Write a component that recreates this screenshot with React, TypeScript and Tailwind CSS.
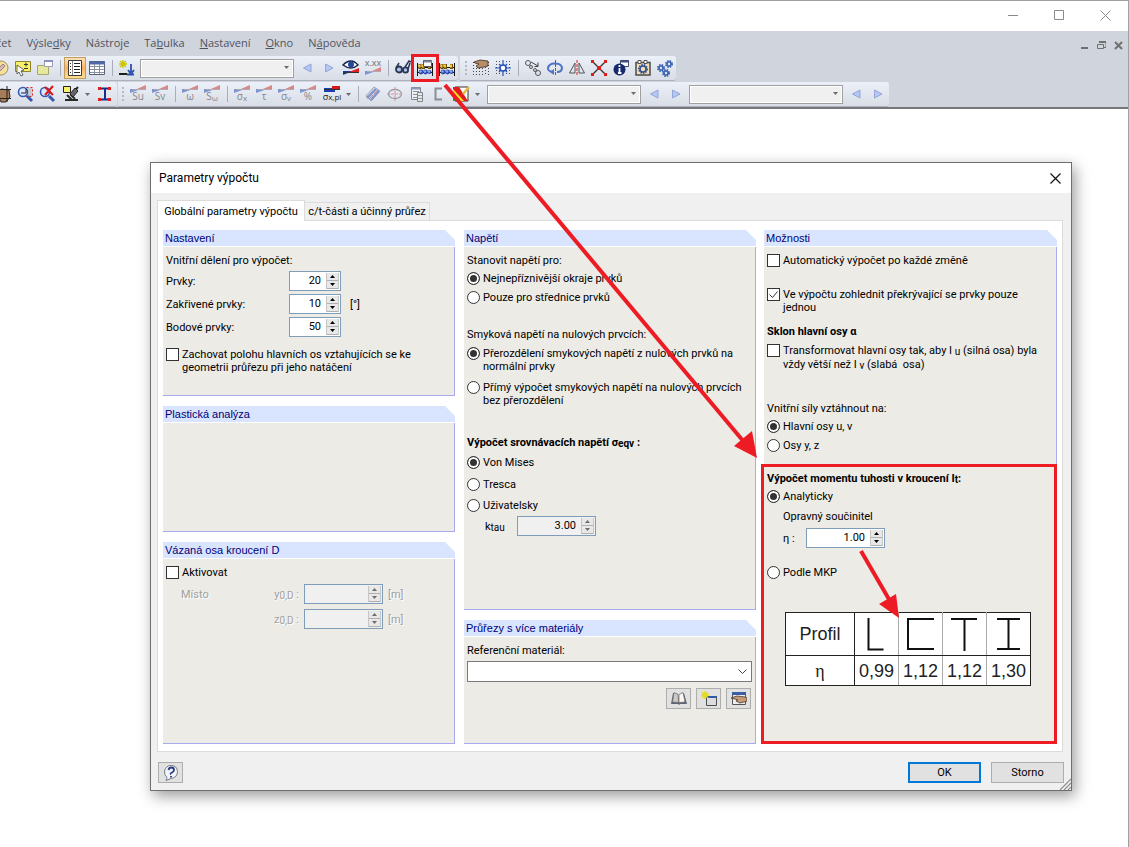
import type { ReactNode } from "react";
import clsx from "clsx";

interface IconButtonProps {
  label: string;
  active?: boolean;
  children: ReactNode;
}

function IconButton({ label, active, children }: IconButtonProps) {
  return (
    <button
      type="button"
      aria-label={label}
      className={clsx(
        "flex h-[22px] w-[22px] shrink-0 items-center justify-center",
        active && "border border-[#c29b5e] bg-gradient-to-b from-[#fde3b8] via-[#fbb25c] to-[#fde08f]"
      )}>
      <svg width="16" height="16" viewBox="0 0 16 16" className="shrink-0 overflow-visible" aria-hidden="true">
        {children}
      </svg>
    </button>
  );
}

function Separator() {
  return (
    <div className="flex w-2 shrink-0 justify-center">
      <div className="h-4 w-px bg-[#a9adb8]" />
    </div>
  );
}

function Grip() {
  return (
    <div className="flex w-2 shrink-0 flex-col items-center gap-[2px]">
      <span className="h-[2px] w-[2px] bg-[#b4b8c2]" />
      <span className="h-[2px] w-[2px] bg-[#b4b8c2]" />
      <span className="h-[2px] w-[2px] bg-[#b4b8c2]" />
      <span className="h-[2px] w-[2px] bg-[#b4b8c2]" />
    </div>
  );
}

function MoreButton({ label }: { label: string }) {
  return (
    <button type="button" aria-label={label} className="flex h-[22px] w-[11px] shrink-0 items-center justify-center">
      <svg width="5" height="3" viewBox="0 0 5 3" aria-hidden="true">
        <path d="M0 0h5L2.500 3z" fill="#6b6b6b" />
      </svg>
    </button>
  );
}

function ToolbarSelect({ label }: { label: string }) {
  return (
    <div className="relative mx-[2px] h-[19px] w-[154px] shrink-0">
      <select
        aria-label={label}
        className="h-full w-full appearance-none border border-[#a0a0a0] bg-[#f0f0f0] shadow-[inset_0_0_0_1px_#fff]">
        <option></option>
      </select>
      <svg width="5" height="3" viewBox="0 0 5 3" className="pointer-events-none absolute top-[7px] right-[5px]" aria-hidden="true">
        <path d="M0 0h5L2.500 3z" fill="#6b6b6b" />
      </svg>
    </div>
  );
}

function Previous() {
  return (
    <IconButton label="Předchozí">
      <path d="M12 4v8L4.500 8z" fill="#b4c8f8" stroke="#94a5d6" />
    </IconButton>
  );
}

function Next() {
  return (
    <IconButton label="Další">
      <path d="M4.500 4v8L12 8z" fill="#b4c8f8" stroke="#94a5d6" />
    </IconButton>
  );
}

function Wedge() {
  return (
    <>
      <path d="M0 3h11L0 7z" fill="#7f95d2" />
      <path d="M7 3l9-4v4z" fill="#de8686" />
      <path d="M2 3.500h14" stroke="#a9acb5" />
    </>
  );
}

function StressButton({ label, symbol, sub }: { label: string; symbol: string; sub?: string }) {
  return (
    <IconButton label={label}>
      <Wedge />
      <text x="8" y="14" textAnchor="middle" fontSize="10" fill="#85888f">
        {symbol}
        {sub && <tspan fontSize="8" dy="1">{sub}</tspan>}
      </text>
    </IconButton>
  );
}

function Gear({ x, y, r, color }: { x: number; y: number; r: number; color: string }) {
  return (
    <g>
      <circle cx={x} cy={y} r={r} fill="none" stroke={color} strokeWidth="2" strokeDasharray="1.400 1" />
      <circle cx={x} cy={y} r={r - 1} fill="none" stroke={color} strokeWidth="1.600" />
    </g>
  );
}

function Abacus() {
  return (
    <>
      <path d="M0.500 3v13M15.500 3v13M0 7.500h16M0 12.500h16" stroke="#151515" />
      <path d="M3 4v5M6.500 4v5M12.500 4v5" stroke="#6a4f08" strokeWidth="3" />
      <path d="M2.500 4.500v3M6 4.500v3M12 4.500v3" stroke="#f4c93c" strokeWidth="2" />
      <circle cx="4" cy="12" r="2.400" fill="#2b49a8" />
      <circle cx="8.500" cy="12" r="2.400" fill="#2b49a8" />
      <circle cx="12.500" cy="12" r="2" fill="#2b49a8" />
      <circle cx="3.500" cy="11.500" r="1.200" fill="#8fabf5" />
      <circle cx="8" cy="11.500" r="1.200" fill="#8fabf5" />
      <circle cx="12" cy="11.500" r="1.200" fill="#8fabf5" />
    </>
  );
}

const mainMenu = [
  { before: "čet", key: "", after: "" },
  { before: "Výsle", key: "d", after: "ky" },
  { before: "Nástro", key: "j", after: "e" },
  { before: "Ta", key: "b", after: "ulka" },
  { before: "", key: "N", after: "astavení" },
  { before: "", key: "O", after: "kno" },
  { before: "N", key: "á", after: "pověda" },
];

const toolbarClass =
  "flex h-[25px] items-center rounded-r-[3px] border-b border-[#aeb1bb] bg-gradient-to-b from-[#ecf0f8] to-[#d9dde6]";

function MainWindow() {
  return (
    <header className="overflow-hidden">
      <div className="flex h-[30px] items-center justify-end gap-[35px] pr-[17px] pb-[2px] text-[#8a8a8a]">
        <button type="button" aria-label="Minimalizovat" className="h-[11px] w-[11px]">
          <svg width="11" height="11" viewBox="0 0 11 11"><path d="M0 5.500h10" stroke="currentColor" /></svg>
        </button>
        <button type="button" aria-label="Maximalizovat" className="h-[11px] w-[11px]">
          <svg width="11" height="11" viewBox="0 0 11 11"><path d="M0.500 0.500h9v9h-9z" fill="none" stroke="currentColor" /></svg>
        </button>
        <button type="button" aria-label="Zavřít" className="h-[11px] w-[11px]">
          <svg width="11" height="11" viewBox="0 0 11 11"><path d="M0.500 0.500l10 10M10.500 0.500l-10 10" stroke="currentColor" /></svg>
        </button>
      </div>
      <div className="border-b-2 border-[#77777b] bg-[#d0d4dd]">
        <div className="flex h-[25px] items-center justify-between pr-[5px] pb-px">
          <nav className="-ml-1 flex gap-[15px] text-[11px] leading-4 text-[#4e535f]">
            {mainMenu.map((item) => (
              <a key={item.before + item.key} href="#">
                {item.before}
                <u>{item.key}</u>
                {item.after}
              </a>
            ))}
          </nav>
          <div className="flex items-center gap-2 pt-1 text-[#707070]">
            <button type="button" aria-label="Minimalizovat dokument">
              <svg width="8" height="9" viewBox="0 0 8 9"><path d="M0 7h7" stroke="currentColor" strokeWidth="2" /></svg>
            </button>
            <button type="button" aria-label="Obnovit dokument">
              <svg width="9" height="9" viewBox="0 0 9 9">
                <path d="M2 1.500h7v5H7M0.500 3.500h6v4h-6z" fill="none" stroke="currentColor" />
                <path d="M2 1h7" stroke="currentColor" strokeWidth="2" />
              </svg>
            </button>
            <button type="button" aria-label="Zavřít dokument">
              <svg width="9" height="9" viewBox="0 0 9 9"><path d="M1 1l7 7M8 1L1 8" stroke="currentColor" strokeWidth="2" /></svg>
            </button>
          </div>
        </div>

        <div className="flex gap-[2px] pb-px">
          <div className={toolbarClass}>
            <div className="-ml-[10px] flex items-center">
              <IconButton label="Zobrazit">
                <circle cx="8" cy="8" r="7" fill="#f1e19a" stroke="#a4905a" />
                <path d="M5 9l5-5 2 2-5 5z" fill="#d9b9bd" stroke="#937c82" />
              </IconButton>
              <IconButton label="Vybrat">
                <path d="M0.500 1.500h15v10h-15z" fill="#f7ef6a" stroke="#8f8430" />
                <path d="M11 2.500v4M9 4.500h4M9 8.500h4" stroke="#333" />
                <path d="M2 5l7 5-3 1 2 4-2 1-2-4-2 2z" fill="#fff" stroke="#444" strokeWidth="0.800" />
              </IconButton>
              <IconButton label="Nové okno">
                <path d="M0.500 5.500h11v9h-11z" fill="#e6e89c" stroke="#a5a970" />
                <path d="M7.500 0.500h8v6h-8z" fill="#fff" stroke="#9a9fb4" />
                <path d="M7 1h9" stroke="#8792c0" strokeWidth="2" />
              </IconButton>
              <Separator />
              <IconButton label="Navigátor" active>
                <path d="M1.500 0.500h13v15h-13z" fill="#fff" stroke="#3a3a3a" />
                <path d="M5.500 1v14" stroke="#888" />
                <path d="M7 3.500h6M7 6.500h6M7 9.500h6M7 12.500h6M3 3.500h1M3 6.500h1M3 9.500h1M3 12.500h1" stroke="#222" />
              </IconButton>
              <IconButton label="Tabulky">
                <path d="M0.500 1.500h15v13h-15z" fill="#fff" stroke="#5b6278" />
                <path d="M0 3h16" stroke="#5068a8" strokeWidth="3" />
                <path d="M1 6.500h14M1 9.500h14M1 12.500h14M5.500 4v10M10.500 4v10" stroke="#8a90a0" />
              </IconButton>
              <Separator />
              <IconButton label="Nový průřez">
                <path d="M4 0v8M0 4h8M1 1l6 6M7 1L1 7" stroke="#cdc500" strokeWidth="1.400" />
                <path d="M0 14h8" stroke="#1c1c1c" strokeWidth="2" />
                <path d="M12 4v8M9 10l3 4 3-4M8 14.500h7" stroke="#2c50a8" strokeWidth="1.800" fill="none" />
              </IconButton>
              <ToolbarSelect label="Zatěžovací stav" />
              <Previous />
              <Next />
              <IconButton label="Zobrazit výsledky">
                <path d="M0 5q8-8 15 0-7 6-15 0z" fill="#fff" stroke="#17224a" strokeWidth="1.400" />
                <circle cx="8" cy="4.500" r="3" fill="#24489d" />
                <path d="M0 11h10L0 15z" fill="#183ab0" />
                <path d="M6 12l10-4v4z" fill="#e02020" />
                <path d="M0 12.500h16" stroke="#333" />
              </IconButton>
              <IconButton label="Zobrazit hodnoty">
                <text x="8" y="6" textAnchor="middle" fontSize="9" fill="#6d7078">x.xx</text>
                <g transform="translate(0 8)"><Wedge /></g>
              </IconButton>
              <Separator />
              <IconButton label="Kontrola">
                <path d="M1 8L4 3M10 7l4-6 2 1" stroke="#2b3654" strokeWidth="1.500" fill="none" />
                <circle cx="4" cy="9.500" r="3" fill="#aac4e8" stroke="#2b3654" strokeWidth="1.800" />
                <circle cx="10.500" cy="10" r="2.600" fill="#aac4e8" stroke="#2b3654" strokeWidth="1.800" />
                <path d="M13 9l2-6" stroke="#2b3654" strokeWidth="1.500" />
              </IconButton>
              <IconButton label="Parametry výpočtu">
                <Abacus />
                <path d="M6.500 0.500h8v6h-8z" fill="#fff" stroke="#555" />
                <path d="M7 1.500h8" stroke="#7c869c" strokeWidth="2" />
              </IconButton>
              <IconButton label="Výpočet">
                <Abacus />
              </IconButton>
            </div>
          </div>
          <div className={clsx(toolbarClass, "pl-[2px]")}>
            <Grip />
            <IconButton label="Nastavit rastr">
              <path d="M0.500 2v14M3.500 8v8M6.500 8v8M9.500 8v8M12.500 7v9M15.500 2v14" stroke="#444" strokeDasharray="1 2" />
              <path d="M1 2l6-2 8 1v5l-4 1-6 1-2-2 3-2-4-1z" fill="#b98c68" stroke="#3d2c22" strokeWidth="0.800" />
            </IconButton>
            <IconButton label="Rastr">
              <path d="M1.500 1v15M4.500 1v15M11.500 1v15M14.500 1v15" stroke="#4b4f5c" strokeDasharray="1 2" />
              <path d="M8 0v16M0 8h16M4 4l8 8M12 4l-8 8" stroke="#2550b8" strokeWidth="1.200" />
              <circle cx="8" cy="8" r="3" fill="#fff" stroke="#2550b8" strokeWidth="1.500" />
            </IconButton>
            <Separator />
            <IconButton label="Kopírovat">
              <circle cx="3" cy="3" r="2.500" fill="none" stroke="#555" />
              <circle cx="6" cy="7" r="1.500" fill="none" stroke="#555" />
              <circle cx="13" cy="13" r="2.500" fill="none" stroke="#555" />
              <circle cx="10" cy="10" r="1.500" fill="none" stroke="#555" />
              <path d="M6 2l7 4M13 2.500V6.500H9.500" fill="none" stroke="#444" />
            </IconButton>
            <IconButton label="Otočit">
              <path d="M6 12Q0 11 1 7.500 3 3 8 3.500q6 0 7 4Q15 12 10 12" fill="none" stroke="#4e72c4" strokeWidth="2" />
              <path d="M7 9v6l-4-3z" fill="#4e72c4" />
              <path d="M8.500 0v16" stroke="#d22" strokeDasharray="3 1" />
            </IconButton>
            <IconButton label="Zrcadlit">
              <path d="M6 3v10H0.500zM10 3v10h5.500z" fill="none" stroke="#555" />
              <path d="M8 0v16" stroke="#d22" strokeDasharray="3 1" />
            </IconButton>
            <IconButton label="Spojit">
              <path d="M1 1l14 14M15 1L1 15" stroke="#333" strokeWidth="1.400" />
              <path d="M0 0h3v3H0zM13 0h3v3h-3zM0 13h3v3H0zM13 13h3v3h-3zM6 6h4v4H6z" fill="#d81e1e" />
            </IconButton>
            <IconButton label="Informace">
              <path d="M7.500 0.500h8v6h-8z" fill="#fff" stroke="#444c66" />
              <path d="M7 1.500h9" stroke="#3f4d80" strokeWidth="2" />
              <circle cx="6.500" cy="9.500" r="6" fill="#16296e" />
              <path d="M6.500 5v2M6.500 8v5M5 13h3.500" stroke="#fff" strokeWidth="1.800" />
            </IconButton>
            <IconButton label="Nastavení výpočtu">
              <path d="M1 2.500h14v12.500H1z" fill="#f1dfb8" stroke="#4b4b4b" strokeWidth="1.500" />
              <path d="M3 0.500h3v3H3zM9 0.500h3v3H9z" fill="#fff" stroke="#555" />
              <Gear x={8} y={9} r={4} color="#345291" />
            </IconButton>
            <IconButton label="Možnosti">
              <Gear x={4} y={8} r={3} color="#3d64b5" />
              <Gear x={12} y={4} r={3} color="#3d64b5" />
              <Gear x={9} y={13} r={3} color="#3d64b5" />
            </IconButton>
          </div>
        </div>

        <div className="flex gap-px">
          <div className={toolbarClass}>
            <div className="-ml-2 flex items-center pr-[2px]">
              <IconButton label="Posunout">
                <path d="M3 6l3-3 8 1 1 7-4 5H6L3 10z" fill="#a67c5a" stroke="#2f2822" />
                <path d="M12 0v16M5 3.500h11M5 12.500h11" stroke="#222" />
              </IconButton>
              <IconButton label="Přiblížit výřez">
                <path d="M5.500 1.500h10v9h-10z" fill="#c9cbd2" stroke="#d22" strokeDasharray="2 2" />
                <circle cx="6" cy="6" r="4.500" fill="#dbe9ff" stroke="#3559ac" strokeWidth="1.600" />
                <path d="M10 10l5 5" stroke="#3559ac" strokeWidth="3" />
                <path d="M4 7h5V3" stroke="#222" fill="none" />
              </IconButton>
              <IconButton label="Zrušit zvětšení">
                <circle cx="6" cy="6" r="4.500" fill="#dbe9ff" stroke="#3559ac" strokeWidth="1.600" />
                <path d="M10 10l5 5" stroke="#3559ac" strokeWidth="3" />
                <path d="M6 1l8 8M14 0L6 9" stroke="#dc1616" strokeWidth="2" />
              </IconButton>
              <div className="w-[2px]" />
              <IconButton label="Pohled">
                <path d="M15 1L8 9l4 4M2 14h13M4 9l5 5" stroke="#2a2a2a" strokeWidth="2" fill="none" />
                <path d="M12 2l3 3-5 6-3-3z" fill="#666" stroke="#222" />
                <path d="M0.500 0.500h7v6h-7z" fill="#f7f06a" stroke="#222" />
              </IconButton>
              <MoreButton label="Další pohledy" />
              <IconButton label="Průřez">
                <path d="M4 2.500h10M4 13.500h10M9 3v10" stroke="#1b2c8f" strokeWidth="2" />
                <path d="M2 1h3v3H2zM12 1h3v3h-3zM2 12h3v3H2zM12 12h3v3h-3z" fill="#e02020" />
              </IconButton>
            </div>
          </div>
          <div className={clsx(toolbarClass, "pl-px")}>
            <Grip />
            <StressButton label="Statický moment Su" symbol="Su" />
            <StressButton label="Statický moment Sv" symbol="Sv" />
            <Separator />
            <StressButton label="Výsečová souřadnice" symbol="ω" />
            <StressButton label="Výsečový moment" symbol="S" sub="ω" />
            <Separator />
            <StressButton label="Normálové napětí" symbol="σ" sub="x" />
            <StressButton label="Smykové napětí" symbol="τ" />
            <StressButton label="Srovnávací napětí" symbol="σ" sub="v" />
            <StressButton label="Využití" symbol="%" />
            <div className="w-[2px]" />
            <IconButton label="Plastické napětí">
              <path d="M0 2h11v4H0z" fill="#1b3fae" />
              <path d="M8 0h8v3H8z" fill="#d81818" />
              <path d="M0 3.500h16" stroke="#333" />
              <text x="8" y="14" textAnchor="middle" fontSize="9" fill="#222">σ<tspan fontSize="8">x,pl</tspan></text>
            </IconButton>
            <MoreButton label="Další napětí" />
            <Separator />
            <IconButton label="Tok napětí">
              <path d="M1 10l8-9 6 4-9 10z" fill="#ccd3e3" stroke="#9aa4bb" />
              <path d="M2 12l9-9M6 14l8-9" stroke="#7e93c8" strokeWidth="2" />
              <path d="M4 13l4-4M9 8l4-4" stroke="#cf8890" />
            </IconButton>
            <IconButton label="Elipsa setrvačnosti">
              <ellipse cx="8" cy="8" rx="6.500" ry="4.500" fill="none" stroke="#9b9ba3" strokeWidth="1.300" />
              <path d="M8 1v14M0 8h16" stroke="#d49296" strokeDasharray="3 1" />
            </IconButton>
            <IconButton label="Detaily">
              <path d="M2.500 1.500h9v12h-9z" fill="#edf0f5" stroke="#82868f" />
              <path d="M3 2.500h8" stroke="#8e9bc0" strokeWidth="2" />
              <path d="M4 5.500h6M4 8.500h6M4 11.500h6" stroke="#8e9299" />
              <path d="M8.500 6.500h5v9h-5z" fill="#e5e7ec" stroke="#82868f" />
              <path d="M9 9.500h4M9 12.500h4" stroke="#8ea08e" />
            </IconButton>
            <IconButton label="Profil">
              <path d="M11 2.500H4.500v11H11" fill="none" stroke="#8b8d92" strokeWidth="2" />
            </IconButton>
            <IconButton label="Barevná škála">
              <path d="M2 1h13v14H2z" fill="#fff" stroke="#333" />
              <path d="M0 1h6l9 14H0z" fill="#e01c1c" />
              <path d="M0 3l11 12H0z" fill="#f2e421" />
              <path d="M0 8l7 7H0z" fill="#1ba32c" />
              <path d="M10 8l6-7" stroke="#e7b93c" strokeWidth="2.500" />
            </IconButton>
            <MoreButton label="Další škály" />
            <div className="w-[2px]" />
            <ToolbarSelect label="Materiál" />
            <Previous />
            <Next />
            <ToolbarSelect label="Místo" />
            <Previous />
            <Next />
          </div>
        </div>
      </div>
    </header>
  );
}

interface SectionProps {
  title: string;
  className?: string;
  children?: ReactNode;
}

function Section({ title, className, children }: SectionProps) {
  return (
    <section className={clsx("flex flex-col", className)}>
      <h2 className="mb-px h-4 bg-[#d9e5fe] pl-[2px] font-[Liberation_Sans,Arial,sans-serif] text-[11px] leading-4 text-[#00007b] [clip-path:polygon(0_0,calc(100%-10px)_0,100%_10px,100%_100%,0_100%)]">
        {title}
      </h2>
      <div className="flex flex-1 flex-col items-start border-r border-b border-[#a9a9ee] bg-[#ecebe6] px-[3px] pt-[7px]">
        {children}
      </div>
    </section>
  );
}

interface ChoiceProps {
  label: ReactNode;
  name?: string;
  checked?: boolean;
  className?: string;
}

function Radio({ label, name, checked, className }: ChoiceProps) {
  return (
    <label className={clsx("flex items-start gap-[3px]", className)}>
      <input
        type="radio"
        name={name}
        defaultChecked={checked}
        className="h-[13px] w-[13px] shrink-0 appearance-none rounded-full border border-[#333] bg-white checked:bg-[#333] checked:shadow-[inset_0_0_0_2px_#fff]"
      />
      <span className="whitespace-nowrap">{label}</span>
    </label>
  );
}

function Checkbox({ label, checked, className }: ChoiceProps) {
  return (
    <label className={clsx("grid grid-cols-[13px_auto] items-start gap-[3px]", className)}>
      <input
        type="checkbox"
        defaultChecked={checked}
        className="peer col-start-1 row-start-1 h-[13px] w-[13px] appearance-none border border-[#333] bg-white"
      />
      <svg width="13" height="13" viewBox="0 0 13 13" className="invisible col-start-1 row-start-1 peer-checked:visible" aria-hidden="true">
        <path d="M2.500 6.500l3 3 5-6" fill="none" stroke="#333" />
      </svg>
      <span className="col-start-2 row-start-1 whitespace-nowrap">{label}</span>
    </label>
  );
}

interface SpinnerProps {
  id: string;
  value?: string;
  wide?: boolean;
  disabled?: boolean;
}

function Spinner({ id, value, wide, disabled }: SpinnerProps) {
  return (
    <div
      className={clsx(
        "flex h-5 shrink-0 gap-[5px] border border-[#7f9db9] p-px",
        wide ? "w-[79px]" : "w-[52px]",
        disabled ? "bg-[#f0f0f0] text-[#6d6d6d]" : "bg-white text-black"
      )}>
      <input
        id={id}
        type="text"
        defaultValue={value}
        disabled={disabled}
        className="w-0 min-w-0 flex-1 bg-transparent text-right text-[11px] leading-4 text-black outline-none"
      />
      <div className="flex w-[13px] flex-col border-x border-[#c6c6c6] bg-[#e8e8e8]">
        <button type="button" aria-label="Zvýšit" disabled={disabled} className="flex h-2 items-center justify-center border-b border-[#b0b0b0]">
          <svg width="5" height="3" viewBox="0 0 5 3"><path d="M0 3h5L2.500 0z" fill="currentColor" /></svg>
        </button>
        <button type="button" aria-label="Snížit" disabled={disabled} className="flex h-2 items-center justify-center border-b border-[#b0b0b0]">
          <svg width="5" height="3" viewBox="0 0 5 3"><path d="M0 0h5L2.500 3z" fill="currentColor" /></svg>
        </button>
      </div>
    </div>
  );
}

function Sub({ children }: { children: ReactNode }) {
  return <span className="relative top-px text-[10px]">{children}</span>;
}

const profiles = [
  { name: "L", eta: "0,99", shape: "M13.500 5v32M12.500 36.500h16" },
  { name: "C", eta: "1,12", shape: "M35 6H9v30h26" },
  { name: "T", eta: "1,12", shape: "M8 6h26M21.500 6v32" },
  { name: "I", eta: "1,30", shape: "M10 6h23M21.500 6v30M10 36h23" },
];

const boldClass = "font-[Roboto,Arial,sans-serif] text-[11px] font-bold leading-[13px]";
const smallButtonClass = "flex h-[21px] w-[25px] items-center justify-center border border-[#adadad] bg-[#e1e1e1]";
const disabledTextClass = "text-[#a0a0a0] [text-shadow:1px_1px_0_#fff]";

function Dialog() {
  return (
    <div
      role="dialog"
      aria-labelledby="dialog-title"
      className="relative border border-[#6e6e6e] bg-[#f0f0f0] px-[6px] pb-[7px] font-[Roboto,Tahoma,sans-serif] text-[11px] leading-[13px] text-black shadow-[3px_5px_14px_rgba(0,0,0,0.400)]">
      <div className="-mx-[6px] flex h-[30px] items-center justify-between bg-white pr-[10px] pl-2">
        <h1 id="dialog-title" className="text-xs leading-4">Parametry výpočtu</h1>
        <button type="button" aria-label="Zavřít">
          <svg width="11" height="11" viewBox="0 0 11 11"><path d="M0.500 0.500l10 10M10.500 0.500l-10 10" stroke="#111" strokeWidth="1.200" /></svg>
        </button>
      </div>

      <div role="tablist" className="flex items-end pt-[7px]">
        <button
          type="button"
          role="tab"
          aria-selected="true"
          className="relative -mb-px h-[21px] w-[148px] border border-b-0 border-[#dcdcdc] bg-white whitespace-nowrap">
          Globální parametry výpočtu
        </button>
        <button type="button" role="tab" aria-selected="false" className="h-[18px] w-[125px] border border-b-0 border-l-0 border-[#dcdcdc] bg-[#f0f0f0] whitespace-nowrap">
          c/t-části a účinný průřez
        </button>
      </div>

      <div className="mr-[2px] grid grid-cols-[293fr_292fr_293fr] gap-2 border border-[#dcdcdc] bg-white px-[5px] pt-[9px] pb-[7px]">
        <div className="flex flex-col gap-[10px] pr-px">
          <Section title="Nastavení" className="min-h-[166px]">
            <p>Vnitřní dělení pro výpočet:</p>
            <div className="mt-1 grid grid-cols-[123px_52px_auto] items-center gap-y-[3px]">
              <label htmlFor="elements">Prvky:</label>
              <Spinner id="elements" value="20" />
              <span />
              <label htmlFor="curved">Zakřivené prvky:</label>
              <Spinner id="curved" value="10" />
              <span className="pl-[9px]">[°]</span>
              <label htmlFor="points">Bodové prvky:</label>
              <Spinner id="points" value="50" />
              <span />
            </div>
            <Checkbox
              className="mt-[11px]"
              label={<>Zachovat polohu hlavních os vztahujících se ke<br />geometrii průřezu při jeho natáčení</>}
            />
          </Section>
          <Section title="Plastická analýza" className="min-h-[126px]" />
          <Section title="Vázaná osa kroucení D" className="min-h-[202px] flex-1">
            <Checkbox label="Aktivovat" />
            <div className={clsx("mt-[5px] ml-[15px] grid grid-cols-[70px_43px_79px_auto] items-center gap-[5px]", disabledTextClass)}>
              <span>Místo</span>
              <label htmlFor="y0" className="text-right whitespace-nowrap">y<Sub>0,D</Sub> :</label>
              <Spinner id="y0" wide disabled />
              <span>[m]</span>
              <span />
              <label htmlFor="z0" className="text-right whitespace-nowrap">z<Sub>0,D</Sub> :</label>
              <Spinner id="z0" wide disabled />
              <span>[m]</span>
            </div>
          </Section>
        </div>

        <div className="flex flex-col gap-[10px]">
          <Section title="Napětí" className="min-h-[380px]">
            <p>Stanovit napětí pro:</p>
            <Radio className="mt-[5px]" name="location" checked label="Nejnepříznivější okraje prvků" />
            <Radio className="mt-[6px]" name="location" label="Pouze pro střednice prvků" />
            <p className="mt-6">Smyková napětí na nulových prvcích:</p>
            <Radio
              className="mt-[6px]"
              name="shear"
              checked
              label={<>Přerozdělení smykových napětí z nulových prvků na<br />normální prvky</>}
            />
            <Radio
              className="mt-2"
              name="shear"
              label={<>Přímý výpočet smykových napětí na nulových prvcích<br />bez přerozdělení</>}
            />
            <h3 className={clsx("mt-[29px]", boldClass)}>
              Výpočet srovnávacích napětí σ<Sub>eqv</Sub> :
            </h3>
            <Radio className="mt-[7px]" name="equivalent" checked label="Von Mises" />
            <Radio className="mt-[9px]" name="equivalent" label="Tresca" />
            <Radio className="mt-2" name="equivalent" label="Uživatelsky" />
            <div className="mt-1 ml-[18px] flex items-center">
              <label htmlFor="ktau" className="w-8">k<Sub>tau</Sub></label>
              <Spinner id="ktau" value="3.00" wide disabled />
            </div>
          </Section>
          <Section title="Průřezy s více materiály" className="min-h-[124px] flex-1">
            <label htmlFor="material">Referenční materiál:</label>
            <div className="relative mt-1 w-full">
              <select id="material" className="block h-[21px] w-full appearance-none border border-[#7a7a7a] bg-white">
                <option></option>
              </select>
              <svg width="9" height="5" viewBox="0 0 9 5" className="pointer-events-none absolute top-2 right-[5px]" aria-hidden="true">
                <path d="M0.500 0.500l4 4 4-4" fill="none" stroke="#444" />
              </svg>
            </div>
            <div className="mt-[6px] flex w-full justify-end gap-[5px] pr-px">
              <button type="button" aria-label="Knihovna materiálů" className={smallButtonClass}>
                <svg width="16" height="13" viewBox="0 0 16 13">
                  <path d="M2 1l5 1 1 9 1-9 4-1 3 11H9l-1 1-1-1H0z" fill="#5e6475" />
                  <path d="M3 0.500l4 2 .5 8L1.500 10z" fill="#cfcac0" stroke="#6b6b70" strokeWidth="0.700" />
                  <path d="M12 0.500l-4 2v8l6-.5z" fill="#fbf8f0" stroke="#6b6b70" strokeWidth="0.700" />
                </svg>
              </button>
              <button type="button" aria-label="Nový materiál" className={smallButtonClass}>
                <svg width="16" height="16" viewBox="0 0 16 16">
                  <path d="M5.500 5.500h10v9h-10z" fill="#dcdcdc" stroke="#4d4d4d" />
                  <path d="M5 6h11" stroke="#3258aa" strokeWidth="2" />
                  <path d="M4 0v8M0 4h8M1 1l6 6M7 1L1 7" stroke="#e4dc1c" strokeWidth="1.500" />
                </svg>
              </button>
              <button type="button" aria-label="Upravit materiál" className={smallButtonClass}>
                <svg width="16" height="14" viewBox="0 0 16 14">
                  <path d="M1.500 0.500h13v12h-13z" fill="#eee" stroke="#555" />
                  <path d="M1 1.500h14" stroke="#3c5ca4" strokeWidth="3" />
                  <path d="M0 6l6-2 8 1 2 1v3l-3 1-4 1-4-2 2-1-3-1z" fill="#c49a78" stroke="#4e3b30" strokeWidth="0.800" />
                </svg>
              </button>
            </div>
          </Section>
        </div>

        <Section title="Možnosti" className="min-h-[514px]">
          <Checkbox label="Automatický výpočet po každé změně" />
          <Checkbox
            className="mt-[21px]"
            checked
            label={<>Ve výpočtu zohlednit překrývající se prvky pouze<br />jednou</>}
          />
          <h3 className={clsx("mt-[11px]", boldClass)}>Sklon hlavní osy α</h3>
          <Checkbox
            className="mt-[6px]"
            label={
              <span className="leading-[14px]">
                Transformovat hlavní osy tak, aby I <Sub>u</Sub> (silná osa) byla<br />
                vždy větší než I <Sub>v</Sub> (slabá&nbsp; osa)
              </span>
            }
          />
          <p className="mt-[30px]">Vnitřní síly vztáhnout na:</p>
          <Radio className="mt-[5px]" name="axes" checked label="Hlavní osy u, v" />
          <Radio className="mt-[6px]" name="axes" label="Osy y, z" />
          <h3 className={clsx("mt-5", boldClass)}>
            Výpočet momentu tuhosti v kroucení I<Sub>t</Sub>:
          </h3>
          <Radio className="mt-[5px]" name="torsion" checked label="Analyticky" />
          <p className="mt-[7px] ml-4">Opravný součinitel</p>
          <div className="mt-[5px] ml-4 flex items-center">
            <label htmlFor="eta" className="w-[23px]">η :</label>
            <Spinner id="eta" value="1.00" wide />
          </div>
          <Radio className="mt-[18px]" name="torsion" label="Podle MKP" />
          <table className="mt-[33px] ml-[18px] table-fixed border-collapse bg-white font-[Liberation_Sans,Arial,sans-serif] text-lg leading-none text-[#222]">
            <thead>
              <tr className="h-[43px]">
                <th scope="col" className="w-[69px] border border-[#222] p-0 font-normal">Profil</th>
                {profiles.map((profile) => (
                  <th key={profile.name} scope="col" aria-label={profile.name} className="w-11 border border-[#222] border-x-[#aaa] p-0 last:border-r-[#222]">
                    <svg width="43" height="42" viewBox="0 0 43 42" className="block" aria-hidden="true">
                      <path d={profile.shape} fill="none" stroke="#111" strokeWidth="2" />
                    </svg>
                  </th>
                ))}
              </tr>
            </thead>
            <tbody>
              <tr className="h-[30px]">
                <th scope="row" className="border border-[#222] p-0 font-[Liberation_Serif,serif] font-normal">η</th>
                {profiles.map((profile) => (
                  <td key={profile.name} className="border border-[#222] border-x-[#aaa] p-0 text-center last:border-r-[#222]">
                    {profile.eta}
                  </td>
                ))}
              </tr>
            </tbody>
          </table>
        </Section>
      </div>

      <div className="mt-[10px] flex items-center gap-[10px] pr-px pl-px">
        <button type="button" aria-label="Nápověda" className={clsx(smallButtonClass, "mr-auto")}>
          <svg width="16" height="16" viewBox="0 0 16 16">
            <path d="M8 0.500q6 0 6.500 6 0 6-6.500 7l-5 2 1-3Q1 10 1.500 6 3 0.500 8 0.500z" fill="#f3f4f7" stroke="#777b85" />
            <path d="M5.500 5Q6 2.500 8.500 2.500T11 5Q11 6.500 9 7.500T8 9.500M8 11v1.500" fill="none" stroke="#263d86" strokeWidth="1.800" />
          </svg>
        </button>
        <button type="submit" className="h-[21px] w-[73px] border-2 border-[#0078d7] bg-[#e1e1e1]">OK</button>
        <button type="button" className="h-[21px] w-[73px] border border-[#adadad] bg-[#e1e1e1]">Storno</button>
      </div>
      <svg width="12" height="12" viewBox="0 0 12 12" className="absolute right-0 bottom-0" aria-hidden="true">
        <path d="M1 12L12 1M5 12l7-7M9 12l3-3" stroke="#8c8c8c" strokeWidth="1.200" />
      </svg>
    </div>
  );
}

// Red marks that lead from the toolbar button to the torsion settings
function Annotations() {
  return (
    <svg width="1129" height="847" viewBox="0 0 1129 847" className="pointer-events-none absolute top-0 left-0" aria-hidden="true">
      <g fill="none" stroke="#ed1c24">
        <path d="M412.500 54.500h25v25h-25z" strokeWidth="3" />
        <path d="M762.500 464.500h293v277h-293z" strokeWidth="3" />
        <path d="M445 84L744 441" strokeWidth="4" />
        <path d="M861 550l29 50" strokeWidth="4" />
      </g>
      <path d="M757 457l-23-12 18-15zM899 617l-20-14 17-10z" fill="#ed1c24" />
    </svg>
  );
}

export default function App() {
  return (
    <div className="relative min-h-screen overflow-hidden border-t border-r border-[#a0a0a0] bg-white font-[Open_Sans,Noto_Sans,sans-serif]">
      <MainWindow />
      <main className="pt-[53px] pr-14 pb-14 pl-[150px]">
        <Dialog />
      </main>
      <Annotations />
    </div>
  );
}
